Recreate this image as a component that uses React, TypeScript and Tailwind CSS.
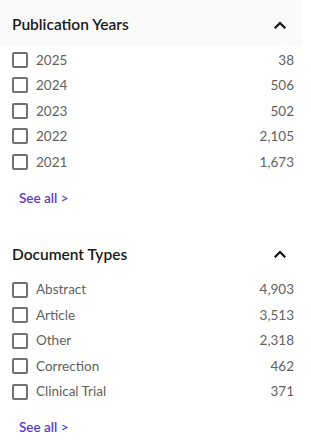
import React from "react";

const font = { fontFamily: "Lato, 'Noto Sans', sans-serif" };

function Chevron() {
  return (
    <svg width="14" height="10" viewBox="0 0 14 10" fill="none">
      <path d="M2.5 7.5 L7 3 L11.5 7.5" stroke="#111" strokeWidth="2.2" strokeLinecap="square" />
    </svg>
  );
}

function Row({ label, count }: { label: string; count: string }) {
  return (
    <div className="flex h-[25.5px] items-center pl-3 pr-[17px]">
      <span className="box-border h-4 w-4 shrink-0 rounded-[2px] border-2 border-[#727272] bg-white" />
      <span className="ml-2 flex-1 text-[13.5px] text-[#626262]">{label}</span>
      <span className="text-[13.5px] text-[#626262]">{count}</span>
    </div>
  );
}

function Section({
  title,
  rows,
  shaded,
}: {
  title: string;
  rows: [string, string][];
  shaded?: boolean;
}) {
  return (
    <div>
      <div
        className={`flex h-[46px] w-[301px] items-center justify-between pl-3 pr-[14px] pt-[3px] ${
          shaded ? "bg-[#fafafa]" : "bg-white"
        }`}
      >
        <span className="text-[15.5px] font-semibold text-[#1a1a1a]">{title}</span>
        <Chevron />
      </div>
      <div className="pt-[1px]">
        {rows.map(([l, c]) => (
          <Row key={l} label={l} count={c} />
        ))}
      </div>
      <div className="mt-[13px] pl-[19px] text-[13.5px] font-semibold text-[#5b3cc4]">See all &gt;</div>
    </div>
  );
}

export default function App() {
  return (
    <div className="h-[445px] w-[311px] bg-white" style={font}>
      <Section
        shaded
        title="Publication Years"
        rows={[
          ["2025", "38"],
          ["2024", "506"],
          ["2023", "502"],
          ["2022", "2,105"],
          ["2021", "1,673"],
        ]}
      />
      <div className="h-[22px]" />
      <Section
        title="Document Types"
        rows={[
          ["Abstract", "4,903"],
          ["Article", "3,513"],
          ["Other", "2,318"],
          ["Correction", "462"],
          ["Clinical Trial", "371"],
        ]}
      />
    </div>
  );
}
